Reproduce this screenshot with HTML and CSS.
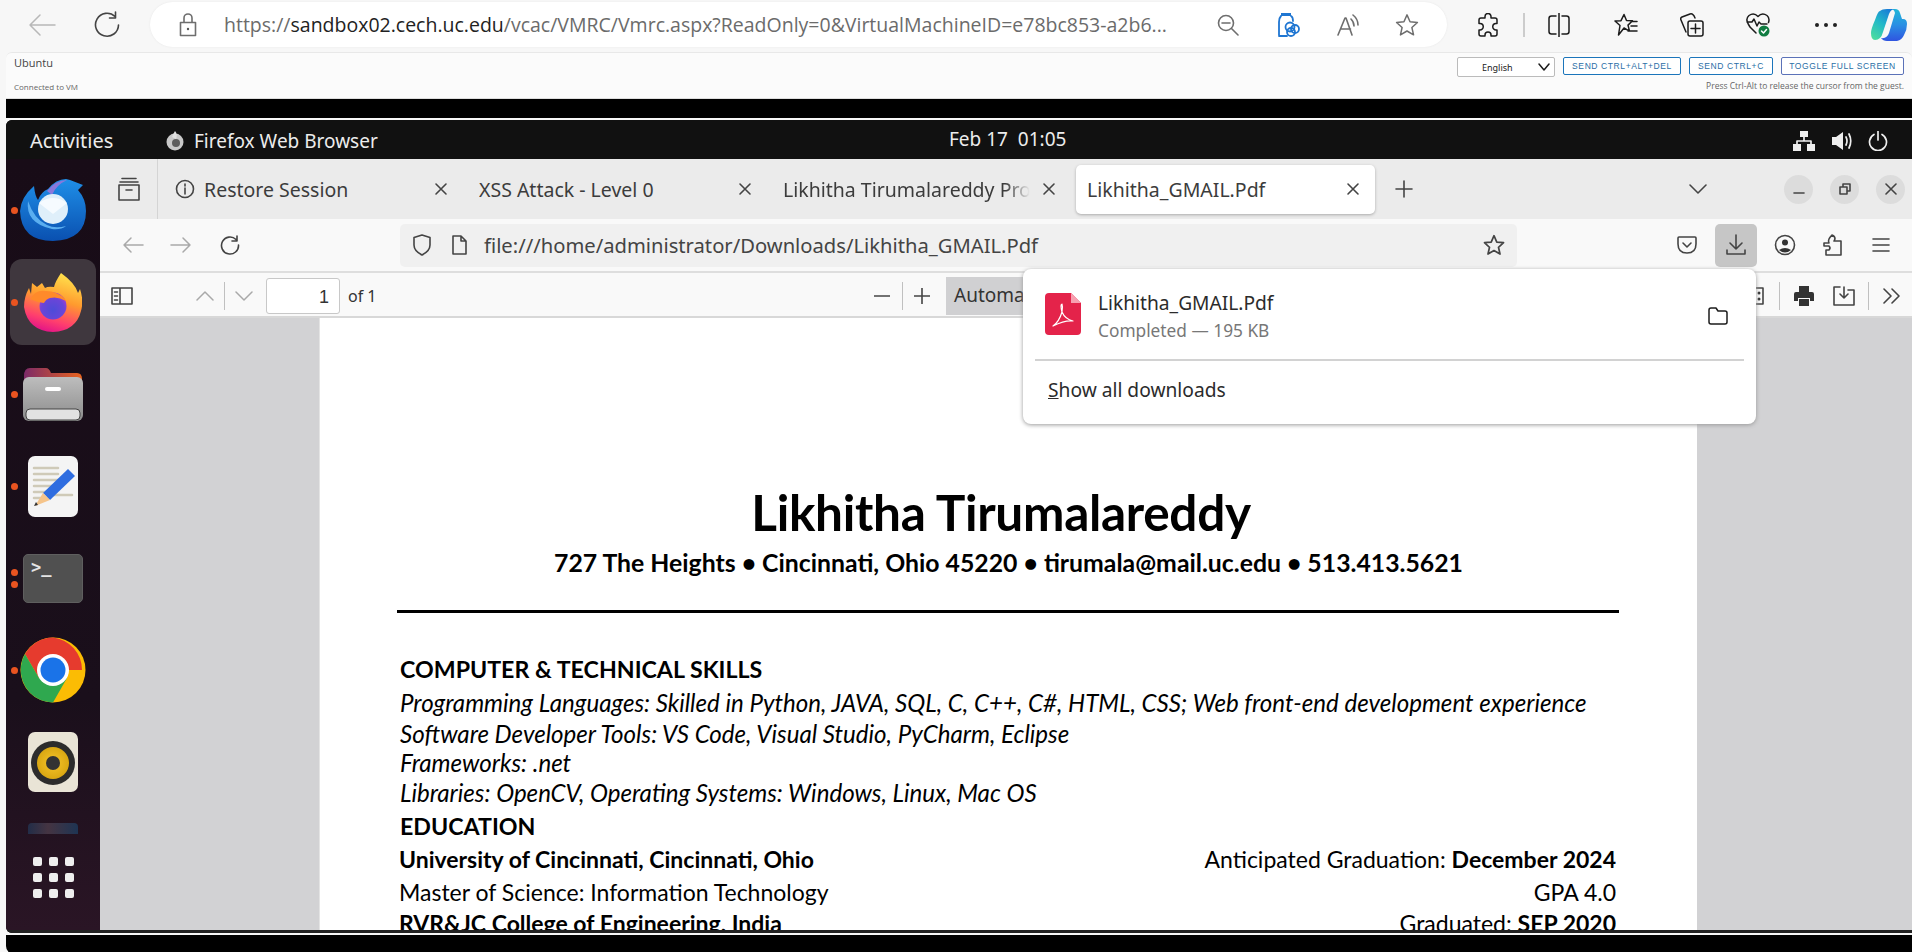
FILE: index.html
```html
<!DOCTYPE html>
<html lang="en">
<head>
<meta charset="utf-8">
<title>Ubuntu VM</title>
<link rel="stylesheet" href="styles.css">
</head>
<body>
<header class="edge-bar">
  <svg class="edge-back" width="28" height="24" viewBox="0 0 28 24"><path d="M27 12H2M12 2 2 12l10 10" class="st-gray"/></svg>
  <svg class="edge-reload" width="26" height="28" viewBox="0 0 26 28"><path d="M21 5.500A11.500 11.500 0 1 0 24.500 14M21.500 1v6h-6" class="st-dark"/></svg>
  <div class="edge-pill">
    <svg class="edge-lock" width="18" height="24" viewBox="0 0 18 24"><path d="M1.500 9.500h15v13h-15zM5 9.500V5a4 4 0 0 1 8 0v4.500" class="st-mid"/><circle cx="9" cy="16" r="1.200" fill="#555"/></svg>
    <span class="edge-url"><span class="url-faint">https://</span>sandbox02.cech.uc.edu<span class="url-faint">/vcac/VMRC/Vmrc.aspx?ReadOnly=0&amp;VirtualMachineID=e78bc853-a2b6...</span></span>
    <svg class="pill-zoom" width="22" height="22" viewBox="0 0 22 22"><circle cx="9" cy="9" r="7.500" class="st-mid"/><path d="M5 9h8M14.500 14.500l6.500 6.500" class="st-mid"/></svg>
    <svg class="pill-bottle" width="22" height="24" viewBox="0 0 22 24"><path d="M3 0h10v3H3z" fill="#1f76d2"/><path d="M3 3Q1 5 1 9v13q0 1 1 1h7M13 3q2 1 2 5M1 23h6" class="st-blue"/><circle cx="12" cy="14" r="4.500" class="st-blue"/><circle cx="17" cy="16" r="4" class="st-blue"/><circle cx="13" cy="19" r="4" class="st-blue"/></svg>
    <svg class="pill-read" width="22" height="22" viewBox="0 0 22 22"><path d="M1 21 8 4h1l6 17M3.500 15h10M14 5q3 3 3 7M16 1q5 4 5 10" class="st-mid"/></svg>
    <svg class="pill-star" width="24" height="24" viewBox="0 0 26 26"><path d="m13 2 3.300 7.500 8 .8-6 5.400 1.800 8L13 19.500l-7.100 4.200 1.800-8-6-5.400 8-.8z" class="st-mid"/></svg>
  </div>
  <svg class="bar-puzzle" width="22" height="24" viewBox="0 0 22 24"><path d="M8 3.500a3 3 0 0 1 6 0V5h4q2 0 2 2v3.500h-1a3.200 3.200 0 0 0 0 6.500h1v4q0 2-2 2h-4v-1a3 3 0 0 0-6 0v1H4q-2 0-2-2v-4h1a3.200 3.200 0 0 0 0-6.500H2V7q0-2 2-2h4z" class="st-black"/></svg>
  <span class="bar-sep"></span>
  <svg class="bar-split" width="22" height="24" viewBox="0 0 22 24"><path d="M11 0v24M8 3H3.500Q1 3 1 5.500v13Q1 21 3.500 21H8M14 3h4.500Q21 3 21 5.500v13q0 2.500-2.500 2.500H14" class="st-black"/></svg>
  <svg class="bar-fav" width="24" height="24" viewBox="0 0 24 24"><path d="m10 1.500 2.500 6 6 .3-4.500 4.300 1.500 6L10 15l-5.500 7 1.500-9.500L1 8l6-.3zM17 8.500h6M17 13h6M14 18h9" class="st-black"/></svg>
  <svg class="bar-coll" width="24" height="24" viewBox="0 0 24 24"><path d="M6 19 1 7q-1-2 1-3l8-3q3-1 5 4M8 10q0-2 2-2h11q2 0 2 2v11q0 2-2 2H10q-2 0-2-2zM15.500 11v9M11 15.500h9" class="st-black"/></svg>
  <svg class="bar-heart" width="24" height="25" viewBox="0 0 24 25"><path d="M4 15 2.500 12.500Q-1 7 3 3.500q5-3.500 9 1 4-4.500 9-1 3 2.500 1.500 7M1 10h5l2-3 3 7 2-4 2 2h6M4 15l6 6" class="st-black"/><circle cx="18" cy="19" r="5.500" fill="#107c41"/><path d="m15.500 19 2 2 3-3.500" class="st-white"/></svg>
  <div class="bar-more"><i></i><i></i><i></i></div>
  <svg class="bar-copilot" width="36" height="32" viewBox="0 0 36 32"><defs><linearGradient id="cpa" x1="0" y1="0" x2="0" y2="1"><stop offset="0" stop-color="#1fb7d8"/><stop offset=".5" stop-color="#2a8fe4"/><stop offset="1" stop-color="#2f54e0"/></linearGradient><linearGradient id="cpb" x1=".8" y1="0" x2=".2" y2="1"><stop offset="0" stop-color="#1a78d8"/><stop offset=".5" stop-color="#22b8c8"/><stop offset="1" stop-color="#49dba0"/></linearGradient></defs><path d="M20 0h4q4 0 5 4l2 6h1q4 0 4 5 0 6-3 11-2 5-7 6H16q-4 0-6-3 6 1 8-5l6-20q-1-4-4-4z" fill="url(#cpa)"/><path d="M16 0h8q-4 0-6 5l-6 18q-2 8-8 8Q0 31 0 24q0-4 4-13 3-9 5-9 2-2 7-2z" fill="url(#cpb)"/></svg>
</header>

<section class="vmrc-head">
  <div class="vmrc-info">
    <span class="vmrc-name">Ubuntu</span>
    <span class="vmrc-status">Connected to VM</span>
  </div>
  <div class="vmrc-actions">
    <div class="vmrc-buttons">
      <div class="vmrc-select"><span>English</span><svg width="14" height="9" viewBox="0 0 14 9"><path d="m2 1 5 6 5-6" class="st-black"/></svg></div>
      <span class="vmrc-btn b1">SEND CTRL+ALT+DEL</span>
      <span class="vmrc-btn b2">SEND CTRL+C</span>
      <span class="vmrc-btn b3">TOGGLE FULL SCREEN</span>
    </div>
    <span class="vmrc-hint">Press Ctrl-Alt to release the cursor from the guest.</span>
  </div>
</section>
<div class="black-band"></div>

<main class="vm">
  <div class="gnome-bar">
    <span class="gn-activities">Activities</span>
    <svg class="gn-fx" width="20" height="20" viewBox="0 0 20 20"><circle cx="10" cy="11" r="8.500" fill="#c9c9c9"/><circle cx="11" cy="12" r="4" fill="#5d5d5d"/><path d="M10 0q3 3 1 8l-4-2q1-3 3-6z" fill="#e0e0e0"/></svg>
    <span class="gn-app">Firefox Web Browser</span>
    <span class="gn-clock">Feb 17&nbsp;&nbsp;01:05</span>
    <svg class="gn-net" width="22" height="20" viewBox="0 0 22 20"><path d="M7 0h8v6H7zM0 13h8v7H0zM14 13h8v7h-8z" fill="#eee"/><path d="M11 6v4M4 13v-3h14v3" class="st-light"/></svg>
    <svg class="gn-vol" width="22" height="20" viewBox="0 0 22 20"><path d="M1 6h4l7-5v18l-7-5H1z" fill="#eee"/><path d="M15 6q2 4 0 8M18 3q3.500 7 0 14" class="st-light"/></svg>
    <svg class="gn-pow" width="20" height="20" viewBox="0 0 20 20"><path d="M6 3.500a8.500 8.500 0 1 0 8 0M10 0v9" class="st-light"/></svg>
  </div>
  <div class="vm-body">
    <nav class="dock">
      <div class="slot">
        <i class="run-dot"></i>
        <svg width="66" height="62" viewBox="0 0 66 62"><defs><linearGradient id="tb" x1="0" y1="0" x2="0" y2="1"><stop offset="0" stop-color="#1f8fe8"/><stop offset="1" stop-color="#0a50b0"/></linearGradient></defs><path d="M28 10Q36 0 46 0l4 1 13 5-5 5q8 9 8 21 0 29-33 30Q1 62 0 32 1 18 14 7q1 10 4 14 3-8 10-11z" fill="url(#tb)"/><path d="M27 12Q36 1 47 1q-11 5-15 15z" fill="#8a78dc"/><path d="M8 22q-3 22 24 28 9 1 14-3-11 3-19-1Q14 40 8 22z" fill="#5aaef0"/><circle cx="33" cy="30" r="15" fill="#dfeffa"/><path d="M19 24q14-10 28 0L33 35z" fill="#f6fbff"/></svg>
      </div>
      <div class="slot slot-active">
        <i class="run-dot"></i>
        <svg width="58" height="59" viewBox="0 0 58 59"><defs><linearGradient id="fxa" x1=".7" y1="0" x2=".4" y2="1"><stop offset="0" stop-color="#ffe44d"/><stop offset=".45" stop-color="#ff9a2e"/><stop offset=".8" stop-color="#ff3e6e"/><stop offset="1" stop-color="#e31587"/></linearGradient><radialGradient id="fxb" cx=".5" cy=".65" r=".6"><stop offset="0" stop-color="#4d4bd8"/><stop offset=".7" stop-color="#6a45d8"/><stop offset="1" stop-color="#a33fd1"/></radialGradient></defs><path d="M37 0q14 10 17 20l2-4q4 12 1 22Q52 58 29 59 4 58 0 34q0-10 5-19l2 6 1-11 5 4 5-4 3 5q3-2 9-1Q31 9 37 0z" fill="url(#fxa)"/><circle cx="29" cy="33" r="13.500" fill="url(#fxb)"/><path d="M6 26q6-10 16-8 6 0 10 2 8 3 10 8-8-5-16-3-4 1-6 5-8-1-14-4z" fill="#ff8a2a"/></svg>
      </div>
      <div class="slot">
        <i class="run-dot"></i>
        <svg width="60" height="57" viewBox="0 0 60 57"><defs><linearGradient id="fo" x1="0" x2="1"><stop offset="0" stop-color="#7c2a68"/><stop offset="1" stop-color="#e9641f"/></linearGradient><linearGradient id="fg" x1="0" y1="0" x2="0" y2="1"><stop offset="0" stop-color="#bdbdbd"/><stop offset="1" stop-color="#8c8c8c"/></linearGradient></defs><path d="M1 10q0-8 6-8h16q3 0 5 5h26q5 0 5 6v14H1z" fill="url(#fo)"/><rect y="11" width="60" height="44" rx="6" fill="url(#fg)"/><rect x="22" y="21" width="16" height="4" rx="2" fill="#fff"/><rect x="3" y="43" width="54" height="11" rx="4" fill="#e2e2e2" stroke="#444"/></svg>
      </div>
      <div class="slot">
        <i class="run-dot"></i>
        <svg width="50" height="61" viewBox="0 0 50 61"><rect width="50" height="61" rx="7" fill="#f4f4f4"/><path d="M6 12h24M6 18h24M6 24h24M6 30h24M6 36h20M6 42h16M22 39h22" stroke="#cfcab8" stroke-width="2.500"/><path d="M40 13 47 20 22 44l-7-7z" fill="#2f6de0"/><path d="M15 37l7 7-15 6z" fill="#f5c48a"/><path d="m6 50 4-1-2-3z" fill="#333"/></svg>
      </div>
      <div class="slot">
        <i class="run-dot dot-a"></i><i class="run-dot dot-b"></i>
        <div class="term-icon"><span>&gt;_</span></div>
      </div>
      <div class="slot">
        <i class="run-dot"></i>
        <svg width="66" height="66" viewBox="0 0 66 66"><circle cx="33" cy="33" r="32.500" fill="#fbbc04"/><path d="M33 .5A32.500 32.500 0 0 0 5 17l14 24 14-8h29A32.500 32.500 0 0 0 33 .5z" fill="#e63b2e"/><path d="M5 17A32.500 32.500 0 0 0 33 65.500L47 41H19z" fill="#2fa84f"/><circle cx="33" cy="33" r="16" fill="#fff"/><circle cx="33" cy="33" r="12.500" fill="#1a73e8"/></svg>
      </div>
      <div class="slot">
        <svg width="50" height="60" viewBox="0 0 50 60"><defs><radialGradient id="spk"><stop offset="0" stop-color="#f6c52a"/><stop offset="1" stop-color="#d9a712"/></radialGradient></defs><rect width="50" height="60" rx="7" fill="#e9e4d6"/><circle cx="25" cy="31" r="22" fill="#2c2c2c"/><circle cx="25" cy="31" r="16" fill="url(#spk)"/><circle cx="25" cy="31" r="7" fill="#333"/></svg>
      </div>
      <div class="dock-hidden"></div>
      <div class="dock-grid"><i></i><i></i><i></i><i></i><i></i><i></i><i></i><i></i><i></i></div>
    </nav>
    <div class="firefox">
      <div class="tabbar">
        <div class="tab-side"><svg width="22" height="24" viewBox="0 0 22 24"><path d="M1 8h20v15H1zM4 1.500h14M2 5h18M8 13h6" class="st-dark"/></svg></div>
        <div class="tab">
          <svg class="tab-info" width="20" height="20" viewBox="0 0 20 20"><circle cx="10" cy="10" r="8.500" class="st-dark"/><path d="M10 9v6M10 5v2" class="st-dark"/></svg>
          <span class="tab-title">Restore Session</span>
          <svg class="tab-x" width="14" height="14" viewBox="0 0 14 14"><path d="m2 2 10 10M12 2 2 12" class="st-dark"/></svg>
        </div>
        <div class="tab">
          <span class="tab-title">XSS Attack - Level 0</span>
          <svg class="tab-x" width="14" height="14" viewBox="0 0 14 14"><path d="m2 2 10 10M12 2 2 12" class="st-dark"/></svg>
        </div>
        <div class="tab">
          <span class="tab-title tab-fade">Likhitha Tirumalareddy Profile</span>
          <svg class="tab-x" width="14" height="14" viewBox="0 0 14 14"><path d="m2 2 10 10M12 2 2 12" class="st-dark"/></svg>
        </div>
        <div class="tab tab-active">
          <span class="tab-title">Likhitha_GMAIL.Pdf</span>
          <svg class="tab-x" width="14" height="14" viewBox="0 0 14 14"><path d="m2 2 10 10M12 2 2 12" class="st-dark"/></svg>
        </div>
        <svg class="tab-plus" width="18" height="18" viewBox="0 0 18 18"><path d="M9 1v16M1 9h16" class="st-dark"/></svg>
        <svg class="tab-list" width="20" height="12" viewBox="0 0 20 12"><path d="m2 2 8 8 8-8" class="st-dark"/></svg>
        <div class="win-btns">
          <span class="win-btn"><svg width="12" height="12" viewBox="0 0 12 12"><path d="M1 10h10" class="st-dark"/></svg></span>
          <span class="win-btn"><svg width="12" height="12" viewBox="0 0 12 12"><path d="M1 4h7v7H1zM4 4V1h7v7H8" class="st-dark"/></svg></span>
          <span class="win-btn"><svg width="12" height="12" viewBox="0 0 12 12"><path d="m1 1 10 10M11 1 1 11" class="st-dark"/></svg></span>
        </div>
      </div>
      <div class="navbar">
        <svg class="nav-back" width="22" height="18" viewBox="0 0 22 18"><path d="M21 9H2M9 2 2 9l7 7" class="st-faint"/></svg>
        <svg class="nav-fwd" width="22" height="18" viewBox="0 0 22 18"><path d="M1 9h19M13 2l7 7-7 7" class="st-faint"/></svg>
        <svg class="nav-reload" width="20" height="20" viewBox="0 0 20 20"><path d="M16 4.500A8.500 8.500 0 1 0 18.500 10M17 1v5h-5" class="st-dark"/></svg>
        <div class="urlbar">
          <svg class="url-shield" width="20" height="22" viewBox="0 0 20 22"><path d="M10 1 2 3.500V11q0 6 8 10 8-4 8-10V3.500z" class="st-dark"/></svg>
          <svg class="url-page" width="16" height="20" viewBox="0 0 16 20"><path d="M2 1h8l5 5v13H2zM10 1v5h5" class="st-dark"/></svg>
          <span class="url-text">file:///home/administrator/Downloads/Likhitha_GMAIL.Pdf</span>
          <svg class="url-star" width="22" height="22" viewBox="0 0 26 26"><path d="m13 2 3.300 7.500 8 .8-6 5.400 1.800 8L13 19.500l-7.100 4.200 1.800-8-6-5.400 8-.8z" class="st-dark2"/></svg>
        </div>
        <svg class="nav-pocket" width="20" height="18" viewBox="0 0 20 18"><path d="M2 1h16q1 0 1 1v6q0 9-9 9T1 8V2q0-1 1-1zM6 7l4 4 4-4" class="st-dark"/></svg>
        <span class="nav-dl"><svg width="20" height="22" viewBox="0 0 20 22"><path d="M10 1v14M4 9l6 6 6-6M1 16v4h18v-4" class="st-dark"/></svg></span>
        <svg class="nav-acct" width="22" height="22" viewBox="0 0 22 22"><circle cx="11" cy="11" r="9.500" class="st-dark"/><circle cx="11" cy="8.500" r="3" fill="#333"/><path d="M5 16q6-4 12 0-6 5-12 0z" fill="#333"/></svg>
        <svg class="nav-ext" width="20" height="22" viewBox="0 0 20 22"><path d="M1 9h5q-1-2 0-4t3-4q3 1 3 4l-1 2h7v14H3v-5h3q2-2 0-4H1z" class="st-dark"/></svg>
        <svg class="nav-menu" width="18" height="14" viewBox="0 0 18 14"><path d="M1 1h16M1 7h16M1 13h16" class="st-dark"/></svg>
      </div>
      <div class="pdfbar">
        <svg class="pdf-side" width="22" height="18" viewBox="0 0 22 18"><path d="M1 1h20v16H1zM9 1v16M3.500 5h3M3.500 9h3M3.500 13h3" class="st-dark"/></svg>
        <svg class="pdf-up" width="18" height="10" viewBox="0 0 18 10"><path d="m1 9 8-8 8 8" class="st-faint"/></svg>
        <span class="pdf-sep s1"></span>
        <svg class="pdf-down" width="18" height="10" viewBox="0 0 18 10"><path d="m1 1 8 8 8-8" class="st-faint"/></svg>
        <span class="pdf-page">1</span>
        <span class="pdf-of">of 1</span>
        <svg class="pdf-minus" width="16" height="2" viewBox="0 0 16 2"><path d="M0 1h16" class="st-dark"/></svg>
        <span class="pdf-sep s2"></span>
        <svg class="pdf-plus" width="16" height="16" viewBox="0 0 16 16"><path d="M8 0v16M0 8h16" class="st-dark"/></svg>
        <span class="pdf-scale">Automatic Zoom</span>
        <svg class="pdf-tool" width="12" height="18" viewBox="0 0 12 18"><path d="M1 1h10v16H1" class="st-dark"/><circle cx="7" cy="6" r="1.500" fill="#333"/><circle cx="7" cy="12" r="1.500" fill="#333"/></svg>
        <span class="pdf-sep s3"></span>
        <svg class="pdf-print" width="20" height="20" viewBox="0 0 20 20"><path d="M5 0h10v6H5zM2 6h16q2 0 2 2v7h-4v-3H4v3H0V8q0-2 2-2zM5 13h10v7H5z" fill="#333"/></svg>
        <svg class="pdf-save" width="22" height="20" viewBox="0 0 22 20"><path d="M7 1H1v18h20V4h-6M11 1v11M7 8l4 4 4-4" class="st-dark"/></svg>
        <span class="pdf-sep s4"></span>
        <svg class="pdf-more" width="18" height="16" viewBox="0 0 18 16"><path d="m1 1 7 7-7 7M9 1l7 7-7 7" class="st-dark"/></svg>
      </div>
      <div class="viewer">
        <article class="page">
          <h1 class="cv-name">Likhitha Tirumalareddy</h1>
          <p class="cv-contact">727 The Heights • Cincinnati, Ohio 45220 • tirumala@mail.uc.edu • 513.413.5621</p>
          <hr class="cv-rule">
          <h2 class="cv-h h-first">COMPUTER &amp; TECHNICAL SKILLS</h2>
          <p class="cv-it it1">Programming Languages: Skilled in Python, JAVA, SQL, C, C++, C#, HTML, CSS; Web front-end development experience</p>
          <p class="cv-it it2">Software Developer Tools: VS Code, Visual Studio, PyCharm, Eclipse</p>
          <p class="cv-it it3">Frameworks: .net</p>
          <p class="cv-it">Libraries: OpenCV, Operating Systems: Windows, Linux, Mac OS</p>
          <h2 class="cv-h h-edu">EDUCATION</h2>
          <div class="cv-row r1"><b>University of Cincinnati, Cincinnati, Ohio</b><span>Anticipated Graduation: <b>December 2024</b></span></div>
          <div class="cv-row"><span>Master of Science: Information Technology</span><span>GPA 4.0</span></div>
          <div class="cv-row r3"><b>RVR&amp;JC College of Engineering, India</b><span>Graduated: <b>SEP 2020</b></span></div>
        </article>
      </div>
    </div>
  </div>
  <div class="dl-panel">
    <div class="dl-item">
      <svg class="dl-pdf" width="36" height="42" viewBox="0 0 36 42"><path d="M4 0h22l10 10v28q0 4-4 4H4q-4 0-4-4V4q0-4 4-4z" fill="#e4234a"/><path d="M26 0v10h10z" fill="#f7a0b0"/><path d="M8 33q6-4 9-14 1-5 0-8-2 0 0 8 3 7 11 9-8-1-20 5z" fill="none" stroke="#fff" stroke-width="1.200"/></svg>
      <div class="dl-text">
        <span class="dl-name">Likhitha_GMAIL.Pdf</span>
        <span class="dl-sub">Completed — 195 KB</span>
      </div>
      <svg class="dl-folder" width="20" height="18" viewBox="0 0 20 18"><path d="M1 3q0-2 2-2h5l2 3h7q2 0 2 2v9q0 2-2 2H3q-2 0-2-2z" class="st-black"/></svg>
    </div>
    <div class="dl-all"><u>S</u>how all downloads</div>
  </div>
  <div class="vm-foot"></div>
</main>
<div class="bottom-band"></div>
</body>
</html>
```
FILE: styles.css
```css
* { box-sizing: border-box; }
html, body { margin: 0; height: 100%; }
body { width: 1912px; height: 952px; overflow: hidden; background: #f7f7f7; font-family: "Noto Sans", sans-serif; color: #333; position: relative; }
svg { display: block; flex: none; }
svg path, svg circle { stroke-linecap: round; stroke-linejoin: round; }
.st-gray { fill: none; stroke: #b8b8b8; stroke-width: 1.500; }
.st-dark { fill: none; stroke: #444; stroke-width: 1.600; }
.st-dark2 { fill: none; stroke: #444; stroke-width: 2; }
.st-mid { fill: none; stroke: #6e6e6e; stroke-width: 1.600; }
.st-faint { fill: none; stroke: #a9a9a9; stroke-width: 1.500; }
.st-black { fill: none; stroke: #1c1c1c; stroke-width: 1.500; }
.st-blue { fill: none; stroke: #1f76d2; stroke-width: 1.800; }
.st-white { fill: none; stroke: #fff; stroke-width: 1.500; }
.st-light { fill: none; stroke: #eee; stroke-width: 1.700; }

/* Edge toolbar */
.edge-bar { height: 52px; display: flex; align-items: center; padding-bottom: 3px; }
.edge-back { margin-left: 28px; }
.edge-reload { margin-left: 38px; }
.edge-pill { width: 1297px; height: 45px; margin-left: 30px; border-radius: 23px; background: #fff; display: flex; align-items: center; padding-left: 29px; box-shadow: 0 0 2px #e6e6e6; }
.edge-url { margin-left: 27px; width: 973px; font-family: "Open Sans", sans-serif; font-size: 19.500px; white-space: nowrap; color: #222; }
.url-faint { color: #6b6b6b; }
.pill-zoom { margin-left: 20px; }
.pill-bottle { margin-left: 39px; }
.pill-read { margin-left: 37px; }
.pill-star { margin-left: 36px; }
.bar-puzzle { margin-left: 30px; }
.bar-sep { width: 2px; height: 24px; margin-left: 24px; background: #ccc; }
.bar-split { margin-left: 23px; }
.bar-fav { margin-left: 44px; }
.bar-coll { margin-left: 42px; }
.bar-heart { margin-left: 42px; }
.bar-more { display: flex; gap: 5px; margin-left: 45px; }
.bar-more i { width: 4px; height: 4px; border-radius: 50%; background: #222; }
.bar-copilot { margin-left: 34px; }

/* VMRC header */
.vmrc-head { height: 47px; margin-left: 6px; background: #fbfbfb; border-top: 1px solid #e8e8e8; border-bottom: 1px solid #ddd; border-radius: 6px 6px 0 0; display: flex; justify-content: space-between; }
.vmrc-info { display: flex; flex-direction: column; padding: 2px 0 0 8px; }
.vmrc-name { font-size: 11px; color: #444; line-height: 16px; font-family: "Open Sans", sans-serif; }
.vmrc-status { font-size: 8px; color: #666; line-height: 12px; margin-top: 10px; font-family: "Open Sans", sans-serif; }
.vmrc-actions { display: flex; flex-direction: column; align-items: flex-end; padding: 4px 8px 0 0; }
.vmrc-buttons { display: flex; align-items: flex-start; }
.vmrc-select { width: 98px; height: 20px; background: #fff; border: 1px solid #bbb; border-radius: 2px; display: flex; align-items: center; padding-left: 24px; font-size: 9px; color: #222; justify-content: space-between; padding-right: 3px; margin-right: 8px; }
.vmrc-btn { height: 18px; border: 1px solid #1b75bb; border-radius: 2px; background: #fff; color: #2a6ea6; font-size: 8.500px; letter-spacing: .6px; display: flex; align-items: center; justify-content: center; font-family: "Liberation Sans", sans-serif; }
.b1 { width: 118px; margin-right: 8px; }
.b2 { width: 84px; margin-right: 8px; }
.b3 { width: 123px; border-color: #5b72b8; }
.vmrc-hint { font-size: 8.500px; color: #666; margin-top: 3px; line-height: 12px; font-family: "Open Sans", sans-serif; }
.black-band { height: 19px; margin-left: 6px; background: #000; }

/* VM screen */
.vm { margin: 2px 0 0 6px; height: 813px; background: #111; border-radius: 6px 0 0 6px; overflow: hidden; position: relative; display: flex; flex-direction: column; }
.gnome-bar { height: 39px; flex: none; background: #111; display: flex; align-items: center; padding-top: 2px; color: #ececec; font-size: 19px; position: relative; }
.gn-activities { margin-left: 24px; width: 135px; font-size: 20px; }
.gn-fx { margin-right: 9px; }
.gn-clock { position: absolute; left: 943px; top: 6px; font-size: 19px; }
.gn-app { width: 1599px; white-space: nowrap; }
.gn-vol { margin-left: 16px; }
.gn-pow { margin-left: 15px; }
.vm-body { flex: 1; min-height: 0; display: flex; }
.vm-foot { height: 3px; flex: none; background: #222; }

/* Dock */
.dock { width: 94px; flex: none; background: linear-gradient(#180c17, #1a0f1b 70%, #2a1525); padding-top: 5px; display: flex; flex-direction: column; }
.slot { height: 92px; display: flex; align-items: center; justify-content: center; position: relative; flex: none; }
.slot-active::before { content: ""; position: absolute; left: 4px; right: 4px; top: 3px; bottom: 3px; border-radius: 12px; background: #3f373e; }
.slot-active svg { position: relative; }
.run-dot { position: absolute; left: 5px; top: 43px; width: 7px; height: 7px; border-radius: 50%; background: #e95420; }
.dot-a { top: 37px; }
.dot-b { top: 49px; }
.term-icon { width: 60px; height: 49px; border-radius: 5px; background: #505050; border: 1px solid #5f5f5f; color: #e4e4e4; font-family: "DejaVu Sans Mono", monospace; font-weight: 700; font-size: 17px; line-height: 20px; padding: 2px 0 0 7px; }
.dock-hidden { width: 50px; height: 11px; margin: 15px auto 0; border-radius: 4px 4px 0 0; background: linear-gradient(90deg, #22324f, #4b3a48 40%, #1d3a5c); opacity: .85; flex: none; }
.dock-grid { width: 41px; margin: 23px auto 0; display: grid; grid-template-columns: repeat(3, 9px); gap: 7px; }
.dock-grid i { width: 9px; height: 9px; border-radius: 2px; background: #eee; }

/* Firefox */
.firefox { flex: 1; min-width: 0; display: flex; flex-direction: column; background: #d2d2d4; }
.tabbar { height: 60px; flex: none; background: #ebebeb; display: flex; align-items: center; position: relative; }
.tab-side { width: 58px; height: 60px; border-right: 1px solid #d4d4d4; display: flex; align-items: center; justify-content: center; margin-right: 6px; }
.tab { width: 299px; height: 49px; margin-right: 5px; display: flex; align-items: center; padding: 0 15px 0 11px; font-size: 19.500px; color: #3c3c3c; }
.tab-info { margin-right: 9px; }
.tab-title { flex: 1; white-space: nowrap; overflow: hidden; }
.tab-fade { -webkit-mask-image: linear-gradient(90deg, #000 90%, transparent); mask-image: linear-gradient(90deg, #000 90%, transparent); }
.tab-active { background: #fff; border-radius: 5px; box-shadow: 0 1px 3px #aaa; }
.tab-x { margin-left: 12px; }
.tab-plus { margin-left: 15px; }
.tab-list { margin-left: 275px; }
.win-btns { display: flex; gap: 17px; margin-left: 76px; }
.win-btn { width: 29px; height: 29px; border-radius: 50%; background: #dcdcdc; display: flex; align-items: center; justify-content: center; }
.navbar { height: 54px; flex: none; background: #f9f9f9; border-bottom: 2px solid #dedede; display: flex; align-items: center; }
.nav-back { margin-left: 22px; }
.nav-fwd { margin-left: 26px; }
.nav-reload { margin-left: 28px; }
.urlbar { width: 1117px; height: 43px; margin-left: 160px; background: #f0f0f0; border-radius: 5px; display: flex; align-items: center; padding: 0 12px; }
.url-shield { margin-right: 19px; }
.url-page { margin-right: 17px; }
.url-text { flex: 1; font-size: 20.200px; color: #444; white-space: nowrap; }
.nav-pocket { margin-left: 160px; }
.nav-dl { width: 42px; height: 43px; margin-left: 18px; border-radius: 5px; background: #c6c6c6; display: flex; align-items: center; justify-content: center; }
.nav-acct { margin-left: 17px; }
.nav-ext { margin-left: 27px; }
.nav-menu { margin-left: 29px; }
.pdfbar { height: 45px; flex: none; background: #f9f9f9; border-bottom: 2px solid #d8d8d8; padding-top: 2px; display: flex; align-items: center; font-size: 16px; color: #333; }
.pdf-side { margin-left: 11px; }
.pdf-up { margin-left: 63px; }
.pdf-sep { width: 1px; height: 28px; background: #c0c0c0; }
.s1 { margin-left: 10px; }
.pdf-down { margin-left: 10px; }
.pdf-page { width: 74px; height: 36px; margin-left: 13px; background: #fff; border: 1px solid #c8c8c8; border-radius: 3px; text-align: right; padding-right: 10px; line-height: 36px; font-family: "Liberation Sans", sans-serif; font-size: 18px; }
.pdf-of { margin-left: 8px; width: 526px; }
.s2 { margin-left: 12px; }
.pdf-plus { margin-left: 11px; }
.pdf-scale { width: 220px; height: 38px; margin-left: 16px; background: #d0d0d2; padding-left: 8px; line-height: 36px; font-size: 19px; white-space: nowrap; overflow: hidden; }
.pdf-tool { margin-left: 586px; }
.s3 { margin-left: 15px; }
.pdf-print { margin-left: 14px; }
.pdf-save { margin-left: 19px; }
.s4 { margin-left: 13px; }
.pdf-more { margin-left: 14px; }
.viewer { flex: 1; min-height: 0; overflow: hidden; }
.page { width: 1378px; height: 640px; margin-left: 219px; background: #fff; padding: 0 78px; color: #000; font-family: Lato, sans-serif; border-left: 1px solid #e4e4e4; }
.cv-name { margin: 0; padding: 165px 15px 0 0; text-align: center; font-size: 49.500px; line-height: 58px; font-weight: 700; letter-spacing: -.3px; }
.cv-contact { margin: 0; padding-top: 7px; text-align: center; font-size: 24.800px; line-height: 30px; font-weight: 700; }
.cv-rule { height: 3px; margin: 32px 0 0 -1px; border: 0; background: #000; width: 1222px; }
.cv-h { margin: 0; font-size: 23.200px; line-height: 30px; font-weight: 700; padding-left: 2px; }
.h-first { margin-top: 41px; }
.h-edu { margin-top: 3px; }
.cv-it { margin: 0; font-size: 24.100px; line-height: 30px; font-style: italic; padding-left: 2px; white-space: nowrap; }
.it1 { margin-top: 4px; }
.it2 { margin-top: 1px; }
.it3 { margin-top: -1px; }
.cv-row { display: flex; justify-content: space-between; font-size: 23px; line-height: 33px; padding: 0 4px 0 1px; width: 1222px; }
.r1 { margin-top: 2px; }
.r3 { margin-top: -2px; }

/* Downloads panel */
.dl-panel { position: absolute; left: 1017px; top: 149px; width: 733px; height: 155px; background: #fff; border-radius: 8px; box-shadow: 0 1px 4px #999; z-index: 2; }
.dl-item { height: 92px; margin: 0 12px; border-bottom: 2px solid #d2d2d2; display: flex; align-items: center; padding: 0 16px 0 10px; }
.dl-text { flex: 1; display: flex; flex-direction: column; margin-left: 17px; gap: 3px; padding-top: 5px; }
.dl-name { font-size: 19.200px; line-height: 26px; color: #2b2b2b; }
.dl-sub { font-size: 17.300px; line-height: 24px; color: #777; }
.dl-folder { margin-top: 4px; }
.dl-all { margin: 16px 0 0 25px; font-size: 19.200px; line-height: 26px; color: #2b2b2b; }
.bottom-band { height: 19px; margin: 2px 0 0 6px; background: #000; border-radius: 0 0 0 8px; }
```
